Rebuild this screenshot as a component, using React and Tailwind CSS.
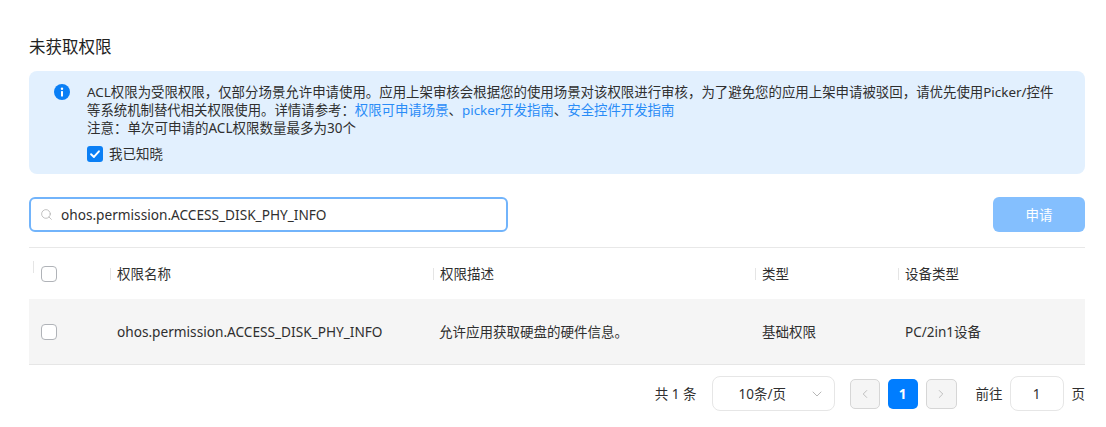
import React from "react";
import { ChevronDown, ChevronLeft, ChevronRight, Search } from "lucide-react";

const font = "font-['Noto_Sans','Noto_Sans_CJK_SC',sans-serif]";

function Box() {
  return <span className="block w-4 h-4 rounded-[4px] border border-[#b0b3b8] bg-white" />;
}

function HeadCell({ className, children }) {
  return (
    <div className={`flex items-center h-full ${className}`}>
      <span className="w-px h-[12px] bg-[#e5e5e5] mr-[6px]" />
      <span>{children}</span>
    </div>
  );
}

export default function App() {
  return (
    <div className={`w-[1106px] h-[427px] overflow-hidden bg-white pl-[29px] pr-[21px] pt-[36px] text-[13.5px] leading-[18px] text-[#2f2f2f] ${font}`}>
      <h2 className="text-[16.5px] leading-[22px] font-normal text-[#222]">未获取权限</h2>

      <div className="mt-[13px] h-[103px] rounded-[8px] bg-[#e2f0fe] pl-[25px] pr-[20px] pt-[12px] flex">
        <svg viewBox="0 0 16 16" className="w-[16px] h-[16px] mt-[1px] mr-[17px] shrink-0">
          <circle cx="8" cy="8" r="8" fill="#0a7ff5" />
          <rect x="7" y="7" width="2" height="5.5" rx="0.6" fill="#fff" />
          <circle cx="8" cy="4.8" r="1.2" fill="#fff" />
        </svg>
        <div>
          <p className="whitespace-nowrap text-[13.43px]">
            ACL权限为受限权限，仅部分场景允许申请使用。应用上架审核会根据您的使用场景对该权限进行审核，为了避免您的应用上架申请被驳回，请优先使用Picker/控件
          </p>
          <p className="whitespace-nowrap text-[13.4px]">
            等系统机制替代相关权限使用。详情请参考：
            <span className="text-[#2a8cf7]">权限可申请场景</span>、
            <span className="text-[#2a8cf7]">picker开发指南</span>、
            <span className="text-[#2a8cf7]">安全控件开发指南</span>
          </p>
          <p>注意：单次可申请的ACL权限数量最多为30个</p>
          <div className="mt-[8px] flex items-center gap-[6px]">
            <span className="w-[16px] h-[16px] rounded-[3px] bg-[#0a7ff5] flex items-center justify-center">
              <svg viewBox="0 0 16 16" className="w-[14px] h-[14px]" fill="none" stroke="#fff" strokeWidth="2.2" strokeLinecap="round" strokeLinejoin="round">
                <path d="M3.5 8.3 6.8 11.4 12.5 4.9" />
              </svg>
            </span>
            <span>我已知晓</span>
          </div>
        </div>
      </div>

      <div className="mt-[23px] flex justify-between">
        <div className="w-[479px] h-[35px] rounded-[6px] border-2 border-[#72b4fb] flex items-center pl-[9px]">
          <Search size={13} strokeWidth={1.3} className="text-[#a8a8a8] mr-[8px]" />
          <span className="text-[13.65px]">ohos.permission.ACCESS_DISK_PHY_INFO</span>
        </div>
        <div className="w-[92px] h-[35px] rounded-[6px] bg-[#84bffe] text-white flex items-center justify-center">
          申请
        </div>
      </div>

      <div className="mt-[15px] border-t border-[#e8e8e8] h-[52px] flex items-center">
        <div className="w-[81px] pl-[4px] h-full flex items-center relative">
          <span className="absolute left-[4px] top-[13px] w-px h-[12px] bg-[#e5e5e5]" />
          <span className="ml-[8px]"><Box /></span>
        </div>
        <HeadCell className="w-[323px]">权限名称</HeadCell>
        <HeadCell className="w-[322px]">权限描述</HeadCell>
        <HeadCell className="w-[143px]">类型</HeadCell>
        <HeadCell className="flex-1">设备类型</HeadCell>
      </div>

      <div className="h-[66px] bg-[#f5f5f5] border-b border-[#e6e6e6] flex items-center">
        <div className="w-[88px] pl-[12px]"><Box /></div>
        <div className="w-[322px] text-[13.65px]">ohos.permission.ACCESS_DISK_PHY_INFO</div>
        <div className="w-[323px]">允许应用获取硬盘的硬件信息。</div>
        <div className="w-[143px]">基础权限</div>
        <div>PC/2in1设备</div>
      </div>

      <div className="mt-[11px] flex items-center justify-end">
        <span className="mr-[15px] whitespace-pre">共 1 条</span>
        <div className="w-[123px] h-[35px] rounded-[8px] border border-[#e6e6e6] flex items-center justify-between pl-[26px] pr-[9px] mr-[15px]">
          <span>10条/页</span>
          <ChevronDown size={16} strokeWidth={1.2} className="text-[#a5a5a5]" />
        </div>
        <div className="w-[30px] h-[30px] rounded-[5px] border border-[#d6d6d6] bg-[#f5f5f5] flex items-center justify-center">
          <ChevronLeft size={14} strokeWidth={1.2} className="text-[#a8a8a8]" />
        </div>
        <div className="w-[30px] h-[30px] ml-[8px] rounded-[5px] bg-[#007dff] text-white font-bold flex items-center justify-center">1</div>
        <div className="w-[31px] h-[30px] ml-[8px] rounded-[5px] border border-[#d6d6d6] bg-[#f5f5f5] flex items-center justify-center">
          <ChevronRight size={14} strokeWidth={1.2} className="text-[#a8a8a8]" />
        </div>
        <span className="ml-[19px]">前往</span>
        <div className="w-[54px] h-[35px] ml-[7px] rounded-[8px] border border-[#e6e6e6] flex items-center justify-center">1</div>
        <span className="ml-[8px]">页</span>
      </div>
    </div>
  );
}
